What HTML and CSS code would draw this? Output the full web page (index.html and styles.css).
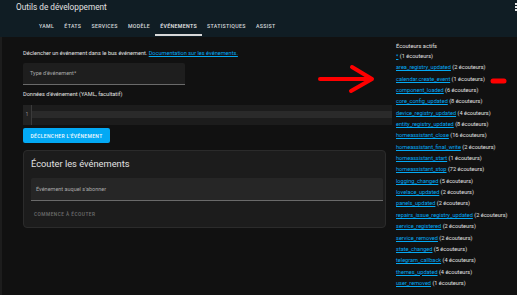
FILE: index.html
```html
<!DOCTYPE html>
<html lang="fr">
<head>
    <meta charset="UTF-8">
    <meta name="viewport" content="width=device-width, initial-scale=1.0">
    <title>Outils de développement</title>
    <link rel="stylesheet" href="styles.css">
</head>
<body>
    <div class="topbar">
        <div class="title-row">
            <span class="title">Outils de développement</span>
            <span class="menu-icon"><i></i><i></i><i></i></span>
        </div>
        <nav class="tabs">
            <a>YAML</a>
            <a>États</a>
            <a>Services</a>
            <a>Modèle</a>
            <a class="active">Événements</a>
            <a>Statistiques</a>
            <a>Assist</a>
        </nav>
    </div>

    <div class="content">
        <div class="main">
            <p class="intro">Déclencher un événement dans le bus événement. <a href="#">Documentation sur les événements.</a></p>

            <div class="field short">Type d'événement*</div>

            <p class="label">Données d'événement (YAML, facultatif)</p>

            <div class="editor">
                <div class="gutter">1</div>
                <div class="lines"><div class="active-line"></div></div>
            </div>

            <button class="primary">Déclencher l'événement</button>

            <div class="card">
                <h2>Écouter les événements</h2>
                <div class="field">Événement auquel s'abonner</div>
                <button class="flat" disabled>Commence à écouter</button>
            </div>
        </div>

        <aside class="listeners">
            <h3>Écouteurs actifs</h3>
            <ul id="listener-list"></ul>
        </aside>
    </div>

    <!-- annotation -->
    <svg class="annotation" width="517" height="295" viewBox="0 0 517 295">
        <path d="M320 79 L372 79 M352 67 L372 79 L351 91" fill="none" stroke="#f00" stroke-width="4" stroke-linecap="round" stroke-linejoin="round"/>
        <path d="M493 81 L504 81" stroke="#f00" stroke-width="5" stroke-linecap="round"/>
    </svg>

    <script>
        const listeners = [
            ['*', 1],
            ['area_registry_updated', 2],
            ['calendar.create_event', 1],
            ['component_loaded', 6],
            ['core_config_updated', 8],
            ['device_registry_updated', 4],
            ['entity_registry_updated', 8],
            ['homeassistant_close', 16],
            ['homeassistant_final_write', 2],
            ['homeassistant_start', 1],
            ['homeassistant_stop', 72],
            ['logging_changed', 5],
            ['lovelace_updated', 2],
            ['panels_updated', 2],
            ['repairs_issue_registry_updated', 2],
            ['service_registered', 2],
            ['service_removed', 2],
            ['state_changed', 5],
            ['telegram_callback', 4],
            ['themes_updated', 4],
            ['user_removed', 1]
        ];

        const list = document.getElementById('listener-list');
        listeners.forEach(([name, count]) => {
            const li = document.createElement('li');
            li.innerHTML = `<a href="#">${name}</a> (${count} écouteurs)`;
            list.appendChild(li);
        });
    </script>
</body>
</html>
```

FILE: styles.css
```css
body {
    margin: 0;
    width: 517px;
    height: 295px;
    overflow: hidden;
    position: relative;
    background: #111111;
    color: #e1e1e1;
    font-family: Roboto, "Noto Sans", sans-serif;
}

.topbar {
    background: #101d24;
    height: 37px;
}

.title-row {
    height: 19px;
    display: flex;
    justify-content: space-between;
    align-items: flex-start;
}

.title {
    font-size: 8.25px;
    line-height: 10px;
    padding: 1.5px 0 0 16px;
}

.menu-icon {
    display: flex;
    flex-direction: column;
    gap: 1.5px;
    margin: 3px -4px 0 0;
}

.menu-icon i {
    display: block;
    width: 6px;
    height: 1.5px;
    background: #e8e8e8;
}

.tabs {
    display: flex;
    padding-left: 34px;
}

.tabs a {
    height: 15px;
    line-height: 15px;
    padding: 0 5.1px;
    font-size: 5.25px;
    font-weight: 500;
    letter-spacing: 0.3px;
    text-transform: uppercase;
    color: #d6d9db;
    border-bottom: 2px solid transparent;
}

.tabs a.active {
    color: #eeeeee;
    border-bottom-color: #d8d8d8;
}

.content {
    display: flex;
    border-left: 2px solid #1d1d1d;
    height: 258px;
}

.main {
    width: 366px;
    padding-left: 21px;
}

.intro, .label {
    margin: 12px 0 0;
    font-size: 5.6px;
    line-height: 8px;
}

.intro a, .listeners a {
    color: #03a9f4;
}

.field {
    box-sizing: border-box;
    height: 22px;
    background: #1e1e1e;
    border-bottom: 1px solid #6a6a6a;
    border-radius: 2px 2px 0 0;
    padding-left: 7px;
    line-height: 21px;
    font-size: 5.5px;
    color: #a9a9a9;
}

.field.short {
    width: 162px;
    margin-top: 6px;
}

.label {
    margin-top: 5px;
}

.editor {
    display: flex;
    height: 20px;
    margin-top: 7px;
    margin-right: -3px;
    background: #1c1c1c;
}

.gutter {
    width: 8px;
    background: #222222;
    border-right: 1px solid #3a3a3a;
    font-size: 4.5px;
    color: #9a9a9a;
    text-align: center;
    line-height: 20px;
}

.lines {
    flex-grow: 1;
    padding-top: 6px;
}

.active-line {
    height: 7px;
    background: #2a2a2a;
}

.primary {
    display: block;
    margin-top: 3px;
    width: 87px;
    height: 15px;
    padding: 0;
    border: none;
    border-radius: 2px;
    background: #03a9f4;
    color: #f4fbff;
    font-family: inherit;
    font-size: 5px;
    font-weight: 500;
    letter-spacing: 0.32px;
    text-transform: uppercase;
}

.card {
    box-sizing: border-box;
    margin-top: 7px;
    width: 363px;
    height: 78px;
    background: #1c1c1c;
    border: 1px solid #2b2b2b;
    border-radius: 4px;
    padding: 7px 2px 0 7px;
}

.card h2 {
    margin: 0;
    font-size: 9.3px;
    font-weight: 400;
    line-height: 12px;
}

.card .field {
    margin-top: 8px;
    height: 23px;
    line-height: 22px;
    padding-left: 5px;
    background: #262626;
}

.flat {
    display: block;
    margin-top: 9px;
    padding: 0 0 0 3px;
    background: none;
    border: none;
    height: 8px;
    color: #6f6f6f;
    font-family: inherit;
    font-size: 4.8px;
    font-weight: 500;
    letter-spacing: 0.45px;
    text-transform: uppercase;
}

.listeners {
    margin-left: 7px;
    padding-top: 5px;
    font-size: 5.6px;
    white-space: nowrap;
}

.listeners h3 {
    margin: 0;
    font-size: 5.7px;
    font-weight: 400;
    line-height: 9px;
}

.listeners ul {
    list-style: none;
    margin: 0;
    padding: 0;
}

.listeners li {
    line-height: 11.35px;
}

.annotation {
    position: absolute;
    left: 0;
    top: 0;
    pointer-events: none;
}
```
